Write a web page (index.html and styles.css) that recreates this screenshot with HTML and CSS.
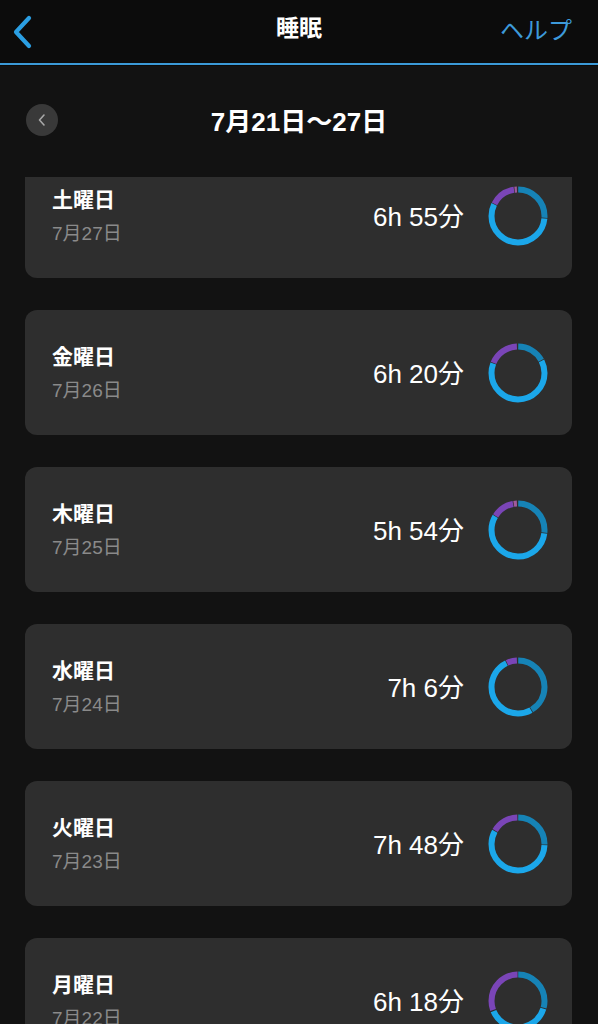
FILE: index.html
```html
<!DOCTYPE html>
<html lang="ja">
<head>
<meta charset="utf-8">
<title>睡眠</title>
<link rel="stylesheet" href="styles.css">
</head>
<body>
<div class="app">
  <header class="topbar">
    <button class="back" aria-label="戻る">
      <svg width="20" height="34" viewBox="0 0 20 34"><path d="M17 3 L4 17 L17 31" fill="none" stroke="#2b9fe3" stroke-width="4.2" stroke-linecap="round" stroke-linejoin="round"/></svg>
    </button>
    <h1 class="title">睡眠</h1>
    <a class="help">ヘルプ</a>
  </header>

  <div class="weeknav">
    <button class="prev" aria-label="前へ">
      <svg width="10" height="14" viewBox="0 0 10 14"><path d="M7 2 L2.5 7 L7 12" fill="none" stroke="#a8a8a8" stroke-width="1.6" stroke-linecap="round" stroke-linejoin="round"/></svg>
    </button>
    <div class="range">7月21日〜27日</div>
  </div>

  <div class="viewport">
    <ul class="days">
      <li class="card">
        <div class="day"><span class="name">土曜日</span><span class="date">7月27日</span></div>
        <span class="time">6h 55分</span>
        <svg class="ring" width="60" height="60" viewBox="0 0 60 60">
          <g transform="rotate(-90 30 30)" fill="none" stroke-width="6">
            <circle cx="30" cy="30" r="26.5" pathLength="360" stroke="#1683b6" stroke-dasharray="93.5 400" stroke-dashoffset="-0.5"/>
            <circle cx="30" cy="30" r="26.5" pathLength="360" stroke="#1ba7ea" stroke-dasharray="200.5 400" stroke-dashoffset="-95.5"/>
            <circle cx="30" cy="30" r="26.5" pathLength="360" stroke="#7a45b7" stroke-dasharray="53.5 400" stroke-dashoffset="-297.5"/>
            <circle cx="30" cy="30" r="26.5" pathLength="360" stroke="#a05a9c" stroke-dasharray="5 400" stroke-dashoffset="-352.5"/>
          </g>
        </svg>
      </li>
      <li class="card">
        <div class="day"><span class="name">金曜日</span><span class="date">7月26日</span></div>
        <span class="time">6h 20分</span>
        <svg class="ring" width="60" height="60" viewBox="0 0 60 60">
          <g transform="rotate(-90 30 30)" fill="none" stroke-width="6">
            <circle cx="30" cy="30" r="26.5" pathLength="360" stroke="#1683b6" stroke-dasharray="60.5 400" stroke-dashoffset="-0.5"/>
            <circle cx="30" cy="30" r="26.5" pathLength="360" stroke="#1ba7ea" stroke-dasharray="228.5 400" stroke-dashoffset="-62.5"/>
            <circle cx="30" cy="30" r="26.5" pathLength="360" stroke="#7a45b7" stroke-dasharray="65 400" stroke-dashoffset="-292.5"/>
          </g>
        </svg>
      </li>
      <li class="card">
        <div class="day"><span class="name">木曜日</span><span class="date">7月25日</span></div>
        <span class="time">5h 54分</span>
        <svg class="ring" width="60" height="60" viewBox="0 0 60 60">
          <g transform="rotate(-90 30 30)" fill="none" stroke-width="6">
            <circle cx="30" cy="30" r="26.5" pathLength="360" stroke="#1683b6" stroke-dasharray="95.5 400" stroke-dashoffset="-0.5"/>
            <circle cx="30" cy="30" r="26.5" pathLength="360" stroke="#1ba7ea" stroke-dasharray="203.5 400" stroke-dashoffset="-97.5"/>
            <circle cx="30" cy="30" r="26.5" pathLength="360" stroke="#7a45b7" stroke-dasharray="46.5 400" stroke-dashoffset="-302.5"/>
            <circle cx="30" cy="30" r="26.5" pathLength="360" stroke="#a05a9c" stroke-dasharray="7 400" stroke-dashoffset="-350.5"/>
          </g>
        </svg>
      </li>
      <li class="card">
        <div class="day"><span class="name">水曜日</span><span class="date">7月24日</span></div>
        <span class="time">7h 6分</span>
        <svg class="ring" width="60" height="60" viewBox="0 0 60 60">
          <g transform="rotate(-90 30 30)" fill="none" stroke-width="6">
            <circle cx="30" cy="30" r="26.5" pathLength="360" stroke="#1683b6" stroke-dasharray="148.5 400" stroke-dashoffset="-0.5"/>
            <circle cx="30" cy="30" r="26.5" pathLength="360" stroke="#1ba7ea" stroke-dasharray="183.5 400" stroke-dashoffset="-150.5"/>
            <circle cx="30" cy="30" r="26.5" pathLength="360" stroke="#7a45b7" stroke-dasharray="22 400" stroke-dashoffset="-335.5"/>
          </g>
        </svg>
      </li>
      <li class="card">
        <div class="day"><span class="name">火曜日</span><span class="date">7月23日</span></div>
        <span class="time">7h 48分</span>
        <svg class="ring" width="60" height="60" viewBox="0 0 60 60">
          <g transform="rotate(-90 30 30)" fill="none" stroke-width="6">
            <circle cx="30" cy="30" r="26.5" pathLength="360" stroke="#1683b6" stroke-dasharray="90.5 400" stroke-dashoffset="-0.5"/>
            <circle cx="30" cy="30" r="26.5" pathLength="360" stroke="#1ba7ea" stroke-dasharray="206.5 400" stroke-dashoffset="-92.5"/>
            <circle cx="30" cy="30" r="26.5" pathLength="360" stroke="#7a45b7" stroke-dasharray="58 400" stroke-dashoffset="-300.5"/>
          </g>
        </svg>
      </li>
      <li class="card">
        <div class="day"><span class="name">月曜日</span><span class="date">7月22日</span></div>
        <span class="time">6h 18分</span>
        <svg class="ring" width="60" height="60" viewBox="0 0 60 60">
          <g transform="rotate(-90 30 30)" fill="none" stroke-width="6">
            <circle cx="30" cy="30" r="26.5" pathLength="360" stroke="#1683b6" stroke-dasharray="104.5 400" stroke-dashoffset="-0.5"/>
            <circle cx="30" cy="30" r="26.5" pathLength="360" stroke="#1ba7ea" stroke-dasharray="140.5 400" stroke-dashoffset="-107"/>
            <circle cx="30" cy="30" r="26.5" pathLength="360" stroke="#7a45b7" stroke-dasharray="109 400" stroke-dashoffset="-250"/>
          </g>
        </svg>
      </li>
    </ul>
  </div>
</div>
</body>
</html>
```

FILE: styles.css
```css
* { box-sizing: border-box; }
html, body {
  margin: 0;
  padding: 0;
  background: #121212;
  font-family: "Liberation Sans", "Noto Sans CJK JP", sans-serif;
  color: #fff;
}
.app {
  width: 598px;
  height: 1024px;
  display: flex;
  flex-direction: column;
  overflow: hidden;
}
.topbar {
  height: 65px;
  flex: none;
  background: #0c0c0c;
  border-bottom: 2px solid #3b9ad8;
  box-shadow: 0 1px 0 #0a0a0a;
  display: flex;
  align-items: center;
  justify-content: space-between;
  padding: 0 26px 3px 12px;
  position: relative;
}
.back {
  background: none;
  border: 0;
  padding: 0;
  width: 24px;
  height: 40px;
  display: flex;
  align-items: center;
  margin-top: 4px;
}
.title {
  margin: 0;
  font-family: "Noto Sans CJK JP", sans-serif;
  font-size: 23px;
  font-weight: 700;
  line-height: 1;
  position: absolute;
  left: 0;
  right: 0;
  top: 15px;
  text-align: center;
  pointer-events: none;
}
.help {
  font-family: "Noto Sans CJK JP", sans-serif;
  color: #3d9ada;
  font-size: 24px;
  line-height: 1;
  margin-top: -3px;
}
.weeknav {
  flex: none;
  height: 112px;
  display: flex;
  align-items: flex-start;
  padding: 39px 0 0 26px;
  position: relative;
}
.prev {
  width: 32px;
  height: 32px;
  border-radius: 50%;
  border: 0;
  padding: 0;
  background: #393939;
  display: flex;
  align-items: center;
  justify-content: center;
}
.range {
  position: absolute;
  left: 0;
  right: 0;
  top: 42px;
  text-align: center;
  font-size: 26px;
  font-weight: 700;
  line-height: 30px;
}
.viewport {
  flex: 1;
  overflow: hidden;
}
.days {
  list-style: none;
  margin: -24px 0 0;
  padding: 0 26px 0 25px;
  display: flex;
  flex-direction: column;
  gap: 32px;
}
.card {
  height: 125px;
  background: #2e2e2e;
  border-radius: 12px;
  display: flex;
  align-items: center;
  padding: 0 24px 0 27px;
}
.day {
  flex: 1;
  display: flex;
  flex-direction: column;
  gap: 8px;
  padding-top: 1px;
}
.name {
  font-family: "Noto Sans CJK JP", sans-serif;
  font-size: 21px;
  font-weight: 700;
  line-height: 28px;
}
.date {
  font-size: 19px;
  color: #8a8a8a;
  line-height: 28px;
}
.time {
  font-size: 26px;
  line-height: 30px;
  margin-right: 24px;
  margin-top: 3px;
}
.ring {
  flex: none;
  display: block;
}
```
